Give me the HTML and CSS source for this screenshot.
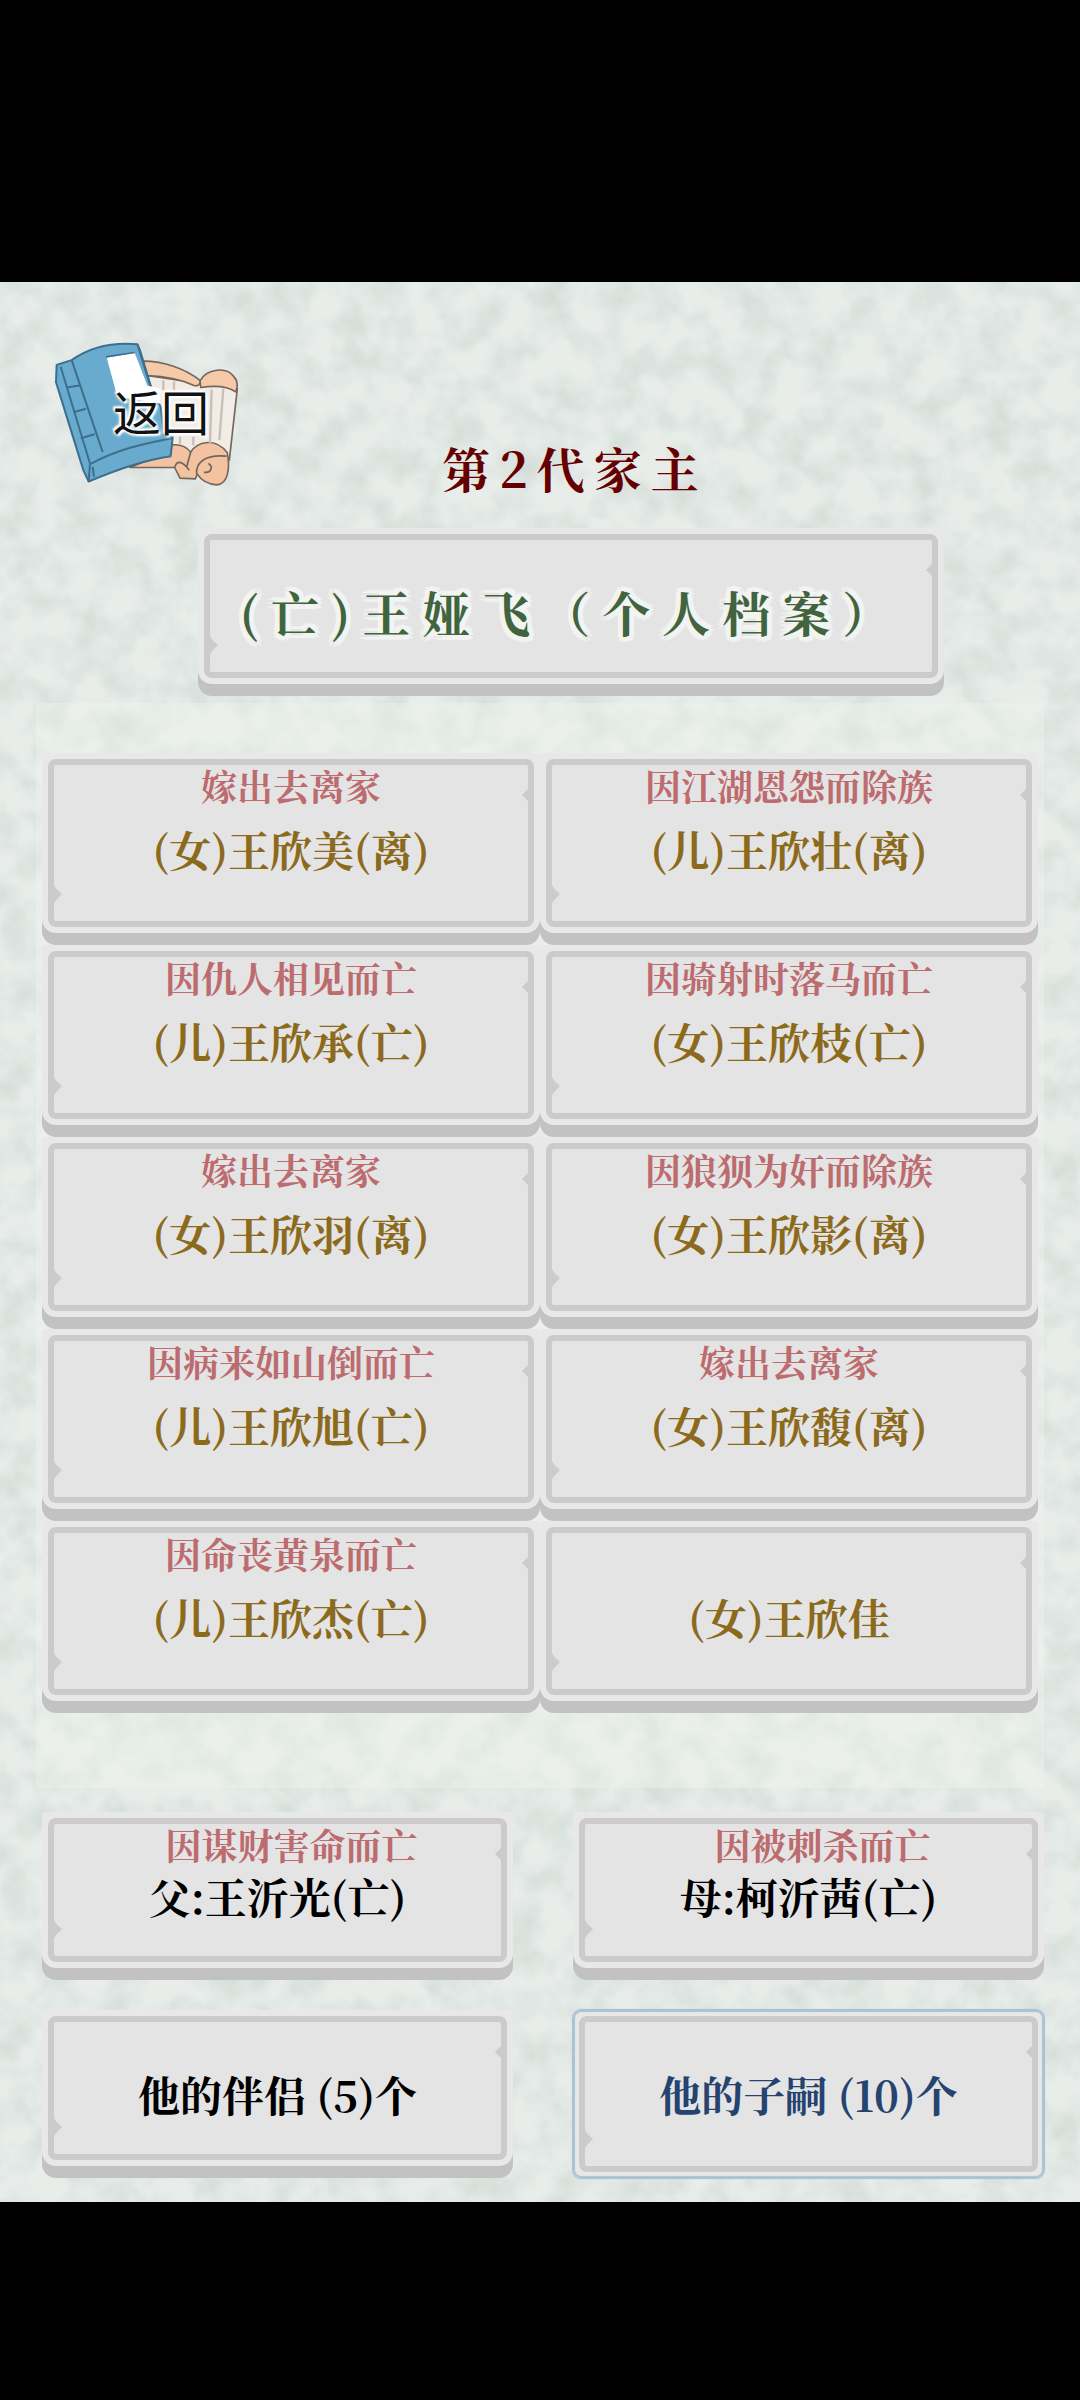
FILE: index.html
```html
<!doctype html>
<html lang="zh-CN">
	<head>
		<meta charset="utf-8">
		<meta name="viewport" content="width=device-width, initial-scale=1">
		<title>个人档案</title>
		<link rel="stylesheet" href="styles.css">
	</head>
	<body>
		<main class="stage">
			<header class="head">
				<button type="button" class="back">
					<svg class="book" viewBox="66 60 564 440" aria-hidden="true">
						<!-- open scroll -->
						<g stroke="#75665c" stroke-width="5" stroke-linejoin="round">
							<path fill="#f2ece6" d="M345 165 L510 190 L622 205 L598 420 L430 400 Z"/>
							<path fill="#f6caa9" d="M335 123 C400 122 465 145 512 182 C510 196 500 198 492 196 C450 176 400 168 352 166 Z"/>
							<path fill="#f6caa9" d="M510 182 C530 145 590 138 612 170 C626 184 622 205 617 215 C590 196 550 196 512 202 Z"/>
							<path fill="#f3c2a0" d="M428 374 C450 372 470 380 482 396 C505 360 560 354 592 398 C600 440 596 492 560 494 C530 492 512 478 502 462 L496 476 L450 474 L434 442 L300 442 L400 400 Z"/>
							<path fill="none" d="M482 396 L470 440 M500 462 C496 424 530 402 590 408 M535 430 C552 440 542 460 522 456 M434 442 C440 420 455 420 478 450"/>
						</g>
						<g stroke="#c9beb8" stroke-width="7" fill="none">
							<path d="M400 180 V210 M432 184 V212 M545 208 L540 370 M580 205 L568 360 M450 350 V370 M490 350 V376"/>
						</g>
						<!-- blue book -->
						<g stroke="#3d6f8d" stroke-width="6" stroke-linejoin="round">
							<path fill="#69abce" d="M80 134 L125 120 C180 80 250 66 322 72 L362 200 L392 260 L402 346 L428 352 L422 408 C340 420 260 448 176 484 L160 450 L78 186 Z"/>
							<path fill="none" d="M125 120 L218 396 M92 140 L180 430 M110 202 L148 196 M130 276 L168 266 M152 354 L194 342 M180 432 C270 384 340 372 426 354 M180 432 L176 484 M192 470 L188 440 M322 72 L330 90 L372 230"/>
						</g>
						<path fill="#fff" d="M230 112 L314 98 L352 196 L392 206 L390 250 L262 230 Z"/>
						<path fill="none" stroke="#3d6f8d" stroke-width="5" d="M228 110 L314 97"/>
					</svg>
					<span class="back-label">返回</span>
				</button>
				<h1 class="title">第2代家主</h1>
			</header>

			<button type="button" class="plate profile">
				<span class="face single"><span class="name">(亡)王娅飞（个人档案）</span></span>
			</button>

			<section class="children">
				<button type="button" class="plate">
					<span class="face"><span class="note">嫁出去离家</span><span class="name">(女)王欣美(离)</span></span>
				</button>
				<button type="button" class="plate">
					<span class="face"><span class="note">因江湖恩怨而除族</span><span class="name">(儿)王欣壮(离)</span></span>
				</button>
				<button type="button" class="plate">
					<span class="face"><span class="note">因仇人相见而亡</span><span class="name">(儿)王欣承(亡)</span></span>
				</button>
				<button type="button" class="plate">
					<span class="face"><span class="note">因骑射时落马而亡</span><span class="name">(女)王欣枝(亡)</span></span>
				</button>
				<button type="button" class="plate">
					<span class="face"><span class="note">嫁出去离家</span><span class="name">(女)王欣羽(离)</span></span>
				</button>
				<button type="button" class="plate">
					<span class="face"><span class="note">因狼狈为奸而除族</span><span class="name">(女)王欣影(离)</span></span>
				</button>
				<button type="button" class="plate">
					<span class="face"><span class="note">因病来如山倒而亡</span><span class="name">(儿)王欣旭(亡)</span></span>
				</button>
				<button type="button" class="plate">
					<span class="face"><span class="note">嫁出去离家</span><span class="name">(女)王欣馥(离)</span></span>
				</button>
				<button type="button" class="plate">
					<span class="face"><span class="note">因命丧黄泉而亡</span><span class="name">(儿)王欣杰(亡)</span></span>
				</button>
				<button type="button" class="plate">
					<span class="face"><span class="note"></span><span class="name">(女)王欣佳</span></span>
				</button>
			</section>

			<section class="relations">
				<button type="button" class="plate parent">
					<span class="face"><span class="note">因谋财害命而亡</span><span class="name">父:王沂光(亡)</span></span>
				</button>
				<button type="button" class="plate parent">
					<span class="face"><span class="note">因被刺杀而亡</span><span class="name">母:柯沂茜(亡)</span></span>
				</button>
				<button type="button" class="plate tab">
					<span class="face single"><span class="name">他的伴侣 (5)个</span></span>
				</button>
				<button type="button" class="plate tab active" aria-pressed="true">
					<span class="face single"><span class="name">他的子嗣 (10)个</span></span>
				</button>
			</section>
		</main>
	</body>
</html>
```
FILE: styles.css
```css
* {
	box-sizing: border-box;
}
body {
	margin: 0;
	padding: 282px 0 198px;
	background-color: #000;
	font-family: "Noto Serif CJK SC", "Source Han Serif SC", "Noto Sans CJK SC", serif;
	font-weight: 700;
}
button {
	margin: 0;
	padding: 0;
	border: 0;
	background: none;
	color: inherit;
	font: inherit;
	cursor: pointer;
}

/* mottled rice paper */
.stage {
	padding-bottom: 24px;
	background-color: #e8edea;
	background-image: url("data:image/svg+xml,%3Csvg xmlns='http://www.w3.org/2000/svg' width='1080' height='960'%3E%3Cfilter id='p' x='0' y='0' width='100%25' height='100%25' color-interpolation-filters='sRGB'%3E%3CfeTurbulence type='fractalNoise' baseFrequency='.03' numOctaves='3' seed='7' stitchTiles='stitch'/%3E%3CfeColorMatrix values='0 0 0 0 .8 0 0 0 0 .84 0 0 0 0 .82 1.4 0 0 0 -.5'/%3E%3C/filter%3E%3Crect width='1080' height='960' filter='url(%23p)'/%3E%3C/svg%3E");
}

.head {
	display: grid;
	grid-template-columns: 188px 1fr 170px;
	grid-template-rows: 152px;
	align-items: start;
	padding: 58px 0 36px 52px;
}
.back {
	display: grid;
	place-items: center;
}
.book {
	grid-area: 1 / 1;
	width: 188px;
	height: 147px;
}
.back-label {
	grid-area: 1 / 1;
	padding: 0 0 8px 30px;
	color: #111;
	font-family: "Noto Sans CJK SC", sans-serif;
	font-size: 48px;
	font-weight: 400;
	line-height: 48px;
	text-shadow: 0 0 3px #fff, 0 0 3px #fff, 0 0 4px #fff, 2px 2px 2px #fff, -2px -2px 2px #fff;
}
.title {
	align-self: end;
	margin: 0;
	color: #600;
	font-size: 48px;
	line-height: 48px;
	letter-spacing: 9px;
	text-align: center;
}

.plate {
	display: block;
	width: 100%;
	padding: 6px;
	margin-bottom: 12px;
	border-radius: 4px 4px 14px 14px;
	background-color: #e8e8e8;
	box-shadow: 0 12px 0 #c2c2c2;
	font-size: 42px;
}
.face {
	position: relative;
	display: grid;
	grid-template-rows: 44px 80px 32px;
	border: 6px solid #cbcbcb;
	border-radius: 8px;
	background-color: #e4e4e4;
	color: #8c6a1c;
}
/* chipped edges of the frame */
.face::before,
.face::after {
	content: "";
	position: absolute;
	background-color: #cbcbcb;
}
.face::before {
	left: 0;
	bottom: 18px;
	width: 8px;
	height: 18px;
	clip-path: polygon(0 0, 30% 22%, 100% 50%, 30% 82%, 0 100%);
}
.face::after {
	right: 0;
	top: 24px;
	width: 6px;
	height: 12px;
	clip-path: polygon(100% 0, 0 50%, 100% 100%);
}
.note {
	color: #bc6b6e;
	font-size: 36px;
	line-height: 42px;
	white-space: nowrap;
}
.name {
	align-self: center;
	line-height: 56px;
	white-space: nowrap;
}
.single {
	grid-template-rows: 116px;
	padding: 14px 0 2px;
}

.profile {
	width: calc(100% - 334px);
	margin: 0 136px 12px 198px;
	font-size: 48px;
	letter-spacing: 12px;
}
.profile .face {
	color: #41643f;
}
.profile .name {
	text-shadow:
		5px 0 1px #f2f4f2, -5px 0 1px #f2f4f2, 0 5px 1px #f2f4f2, 0 -5px 1px #f2f4f2,
		4px 4px 1px #f2f4f2, -4px 4px 1px #f2f4f2, 4px -4px 1px #f2f4f2, -4px -4px 1px #f2f4f2;
}

.children {
	display: grid;
	grid-template-columns: 1fr 1fr;
	margin: 19px 36px 0;
	padding: 50px 6px 75px;
	background-color: rgba(240, 246, 242, 0.35);
}

.relations {
	display: grid;
	grid-template-columns: 1fr 1fr;
	gap: 30px 60px;
	padding: 24px 36px 0 42px;
}
.parent .face {
	grid-template-rows: 44px 56px 32px;
	color: #000;
}
.parent .note {
	padding-left: 28px;
}
.tab .face {
	color: #000;
}
.active {
	margin-bottom: 0;
	border-radius: 8px;
	box-shadow: 0 0 1px 1px #a4bfd3, inset 0 0 1px 2px #a9c2d4;
}
.active .face {
	padding-bottom: 14px;
	color: #25436f;
}
```
